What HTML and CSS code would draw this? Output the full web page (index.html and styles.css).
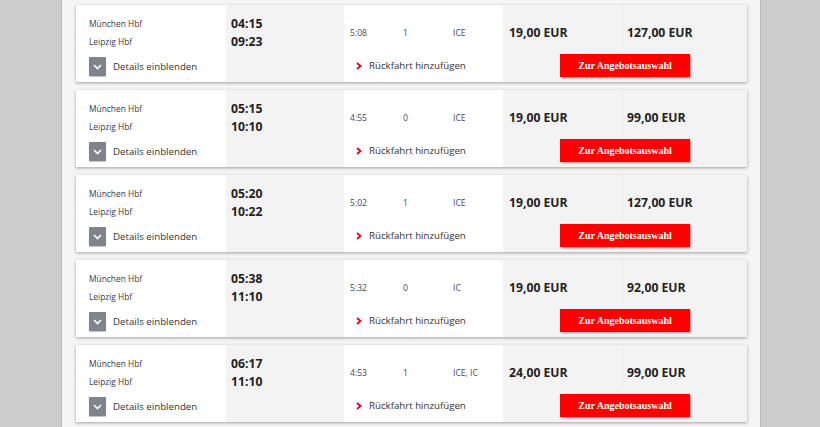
FILE: index.html
```html
<!DOCTYPE html>
<html lang="de">
<head>
<meta charset="utf-8">
<title>Verbindungen</title>
<link rel="stylesheet" href="styles.css">
</head>
<body>
<div class="page">
  <div class="list">
    <!-- card 1 -->
    <div class="card">
      <div class="c-stations">
        <div class="st">München Hbf</div>
        <div class="st">Leipzig Hbf</div>
        <div class="details"><span class="dbtn"><svg width="9" height="6" viewBox="0 0 9 6"><path d="M1 1 L4.5 4.5 L8 1" fill="none" stroke="#fff" stroke-width="1.6"/></svg></span><span>Details einblenden</span></div>
      </div>
      <div class="c-times"><div class="t">04:15</div><div class="t">09:23</div></div>
      <div class="c-info">
        <div class="info-row"><span class="dur">5:08</span><span class="chg">1</span><span class="prod">ICE</span></div>
        <div class="ret"><svg width="6" height="8" viewBox="0 0 6 8"><path d="M1 1 L4.5 4 L1 7" fill="none" stroke="#ec0016" stroke-width="1.8"/></svg><span>Rückfahrt hinzufügen</span></div>
      </div>
      <div class="c-p1">19,00 EUR</div>
      <div class="c-p2">127,00 EUR</div>
      <div class="c-btn"><span class="btn">Zur Angebotsauswahl</span></div>
    </div>
    <!-- card 2 -->
    <div class="card">
      <div class="c-stations">
        <div class="st">München Hbf</div>
        <div class="st">Leipzig Hbf</div>
        <div class="details"><span class="dbtn"><svg width="9" height="6" viewBox="0 0 9 6"><path d="M1 1 L4.5 4.5 L8 1" fill="none" stroke="#fff" stroke-width="1.6"/></svg></span><span>Details einblenden</span></div>
      </div>
      <div class="c-times"><div class="t">05:15</div><div class="t">10:10</div></div>
      <div class="c-info">
        <div class="info-row"><span class="dur">4:55</span><span class="chg">0</span><span class="prod">ICE</span></div>
        <div class="ret"><svg width="6" height="8" viewBox="0 0 6 8"><path d="M1 1 L4.5 4 L1 7" fill="none" stroke="#ec0016" stroke-width="1.8"/></svg><span>Rückfahrt hinzufügen</span></div>
      </div>
      <div class="c-p1">19,00 EUR</div>
      <div class="c-p2">99,00 EUR</div>
      <div class="c-btn"><span class="btn">Zur Angebotsauswahl</span></div>
    </div>
    <!-- card 3 -->
    <div class="card">
      <div class="c-stations">
        <div class="st">München Hbf</div>
        <div class="st">Leipzig Hbf</div>
        <div class="details"><span class="dbtn"><svg width="9" height="6" viewBox="0 0 9 6"><path d="M1 1 L4.5 4.5 L8 1" fill="none" stroke="#fff" stroke-width="1.6"/></svg></span><span>Details einblenden</span></div>
      </div>
      <div class="c-times"><div class="t">05:20</div><div class="t">10:22</div></div>
      <div class="c-info">
        <div class="info-row"><span class="dur">5:02</span><span class="chg">1</span><span class="prod">ICE</span></div>
        <div class="ret"><svg width="6" height="8" viewBox="0 0 6 8"><path d="M1 1 L4.5 4 L1 7" fill="none" stroke="#ec0016" stroke-width="1.8"/></svg><span>Rückfahrt hinzufügen</span></div>
      </div>
      <div class="c-p1">19,00 EUR</div>
      <div class="c-p2">127,00 EUR</div>
      <div class="c-btn"><span class="btn">Zur Angebotsauswahl</span></div>
    </div>
    <!-- card 4 -->
    <div class="card">
      <div class="c-stations">
        <div class="st">München Hbf</div>
        <div class="st">Leipzig Hbf</div>
        <div class="details"><span class="dbtn"><svg width="9" height="6" viewBox="0 0 9 6"><path d="M1 1 L4.5 4.5 L8 1" fill="none" stroke="#fff" stroke-width="1.6"/></svg></span><span>Details einblenden</span></div>
      </div>
      <div class="c-times"><div class="t">05:38</div><div class="t">11:10</div></div>
      <div class="c-info">
        <div class="info-row"><span class="dur">5:32</span><span class="chg">0</span><span class="prod">IC</span></div>
        <div class="ret"><svg width="6" height="8" viewBox="0 0 6 8"><path d="M1 1 L4.5 4 L1 7" fill="none" stroke="#ec0016" stroke-width="1.8"/></svg><span>Rückfahrt hinzufügen</span></div>
      </div>
      <div class="c-p1">19,00 EUR</div>
      <div class="c-p2">92,00 EUR</div>
      <div class="c-btn"><span class="btn">Zur Angebotsauswahl</span></div>
    </div>
    <!-- card 5 -->
    <div class="card">
      <div class="c-stations">
        <div class="st">München Hbf</div>
        <div class="st">Leipzig Hbf</div>
        <div class="details"><span class="dbtn"><svg width="9" height="6" viewBox="0 0 9 6"><path d="M1 1 L4.5 4.5 L8 1" fill="none" stroke="#fff" stroke-width="1.6"/></svg></span><span>Details einblenden</span></div>
      </div>
      <div class="c-times"><div class="t">06:17</div><div class="t">11:10</div></div>
      <div class="c-info">
        <div class="info-row"><span class="dur">4:53</span><span class="chg">1</span><span class="prod">ICE, IC</span></div>
        <div class="ret"><svg width="6" height="8" viewBox="0 0 6 8"><path d="M1 1 L4.5 4 L1 7" fill="none" stroke="#ec0016" stroke-width="1.8"/></svg><span>Rückfahrt hinzufügen</span></div>
      </div>
      <div class="c-p1">24,00 EUR</div>
      <div class="c-p2">99,00 EUR</div>
      <div class="c-btn"><span class="btn">Zur Angebotsauswahl</span></div>
    </div>
  </div>
</div>
</body>
</html>
```

FILE: styles.css
```css
html, body {
  margin: 0;
  padding: 0;
}
body {
  background: #cccccc;
  font-family: "Open Sans", "Noto Sans", sans-serif;
  color: #333;
  height: 427px;
  overflow: hidden;
}
.page {
  margin-left: 61px;
  width: 700px;
  height: 427px;
  background: #f5f5f5;
  border-left: 1px solid #b9b9b9;
  border-right: 1px solid #b9b9b9;
  box-sizing: border-box;
  padding: 5px 14px 0 14px;
}
.list {
  display: flex;
  flex-direction: column;
  gap: 8px;
}
.card {
  display: grid;
  grid-template-columns: 150px 118px 159px 120px 124px;
  grid-template-rows: 44px 33px;
  background: #fff;
  box-shadow: 0 1px 3px rgba(0,0,0,0.35);
  width: 671px;
}
.c-stations {
  grid-column: 1;
  grid-row: 1 / 3;
  padding: 10px 0 0 13px;
  display: flex;
  flex-direction: column;
}
.st {
  font-size: 8.4px;
  height: 18px;
  line-height: 18px;
  color: #3a3a45;
}
.details {
  margin-top: 6px;
  display: flex;
  align-items: center;
  gap: 7px;
  font-size: 9.7px;
  color: #333;
}
.dbtn {
  width: 17px;
  height: 19px;
  background: #7f838c;
  border-radius: 1px;
  display: flex;
  align-items: center;
  justify-content: center;
  box-shadow: 0 1px 1px rgba(0,0,0,0.25);
}
.c-times {
  grid-column: 2;
  grid-row: 1 / 3;
  background: #f3f3f3;
  padding: 10px 0 0 5px;
}
.t {
  font-size: 12.2px;
  font-weight: 700;
  height: 18px;
  line-height: 18px;
  color: #222;
}
.c-info {
  grid-column: 3;
  grid-row: 1 / 3;
  padding: 20px 0 0 6px;
  display: flex;
  flex-direction: column;
}
.info-row {
  display: flex;
  font-size: 8.6px;
  height: 16px;
  line-height: 16px;
  color: #4a4652;
}
.dur { width: 53px; }
.chg { width: 50px; }
.ret {
  margin-top: 18px;
  margin-left: 6px;
  display: flex;
  align-items: center;
  gap: 7px;
  font-size: 9.7px;
  color: #333;
}
.c-p1, .c-p2 {
  grid-row: 1;
  background: #f3f3f3;
  font-size: 12.2px;
  font-weight: 700;
  color: #222;
  padding-top: 19px;
  line-height: 18px;
}
.c-p1 {
  grid-column: 4;
  padding-left: 6px;
  border-right: 1px solid #ebebeb;
}
.c-p2 {
  grid-column: 5;
  padding-left: 4px;
}
.c-btn {
  grid-column: 4 / 6;
  grid-row: 2;
  background: #f3f3f3;
  display: flex;
  justify-content: center;
  align-items: flex-start;
  padding-top: 5px;
}
.btn {
  width: 130px;
  height: 23px;
  background: #ff0000;
  color: #fff;
  font-family: "Liberation Serif", serif;
  font-weight: 700;
  font-size: 10px;
  display: flex;
  align-items: center;
  justify-content: center;
  box-shadow: 1px 1px 2px rgba(0,0,0,0.4);
}
```
